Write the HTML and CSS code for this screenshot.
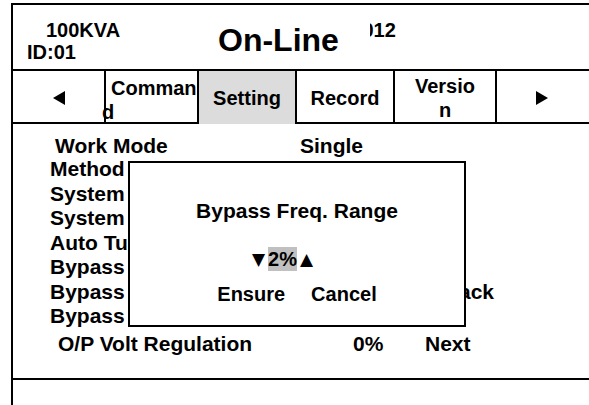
FILE: index.html
```html
<!DOCTYPE html>
<html lang="en">
<head>
    <meta charset="UTF-8">
    <meta name="viewport" content="width=device-width, initial-scale=1.0">
    <title>UPS Setting</title>
    <link rel="stylesheet" href="styles.css">
</head>
<body>
    <div class="screen">
        <!-- 상단: 용량 / 상태 / 시간 -->
        <div class="head">
            <div class="unit">
                <div class="kva">100KVA</div>
                <div class="id">ID:01</div>
            </div>
            <div class="title">On-Line</div>
            <div class="clock"><span>2012</span></div>
        </div>

        <!-- 메뉴 탭 -->
        <div class="tabs">
            <div class="tab">
                <svg width="12" height="14" viewBox="0 0 12 14"><polygon points="12,0 12,14 0,7" fill="#000"/></svg>
            </div>
            <div class="tab cmd"><span class="l1">Comman</span><span class="l2">d</span></div>
            <div class="tab on">Setting</div>
            <div class="tab">Record</div>
            <div class="tab">Versio<br>n</div>
            <div class="tab">
                <svg width="12" height="14" viewBox="0 0 12 14"><polygon points="0,0 12,7 0,14" fill="#000"/></svg>
            </div>
        </div>

        <!-- 설정 목록 -->
        <div class="content">
            <div class="row work"><span class="lbl">Work Mode</span><span class="val">Single</span></div>
            <div class="row"><span class="lbl">Method of Start</span></div>
            <div class="row"><span class="lbl">System Voltage</span></div>
            <div class="row"><span class="lbl">System Frequency</span></div>
            <div class="row"><span class="lbl">Auto Turn On</span></div>
            <div class="row"><span class="lbl">Bypass Volt Range</span></div>
            <div class="row fb"><span class="lbl">Bypass Mode</span><span class="val">Fast Track</span></div>
            <div class="row"><span class="lbl">Bypass Freq. Range</span></div>
            <div class="row op"><span class="lbl">O/P Volt Regulation</span><span class="val">0%</span><span class="next">Next</span></div>

            <!-- 설정값 변경 팝업 -->
            <div class="dialog">
                <div class="dlg-title">Bypass Freq. Range</div>
                <div class="dlg-val"><span class="tri">▼</span><span class="sel">2%</span><span class="tri">▲</span></div>
                <div class="dlg-btns"><span>Ensure</span><span>Cancel</span></div>
            </div>
        </div>

        <div class="foot"></div>
    </div>
</body>
</html>
```

FILE: styles.css
```css
body {
    margin: 0;
    background: #fff;
    color: #000;
    font-family: "Liberation Sans", Arial, sans-serif;
    font-weight: bold;
    overflow: hidden;
}

.screen {
    margin: 3px 0 0 11px;
    width: 620px;
    height: 440px;
    border: 2px solid #000;
}

/* 상단 */
.head {
    display: flex;
    height: 64px;
}
.unit {
    width: 205px;
    padding-top: 14px;
    font-size: 20px;
    line-height: 22px;
}
.kva {
    padding-left: 33px;
}
.id {
    padding-left: 14px;
}
.title {
    margin-top: 18px;
    font-size: 32px;
    line-height: 34px;
}
.clock {
    margin: 14px 0 0 31px;
    width: 26px;
    overflow: hidden;
    font-size: 20px;
    line-height: 22px;
    display: flex;
    justify-content: flex-end;
}

/* 탭 */
.tabs {
    display: grid;
    grid-template-columns: 91px 93px 98px 98px 102px 91px;
    height: 51px;
    border-top: 2px solid #000;
    border-bottom: 2px solid #000;
    font-size: 20px;
    line-height: 24px;
}
.tab {
    display: flex;
    flex-direction: column;
    align-items: center;
    justify-content: center;
    text-align: center;
    border-left: 2px solid #000;
}
.tab:first-child {
    border-left: 0;
}
.tab.on {
    background: #dcdcdc;
}
.tab.cmd {
    align-items: flex-start;
    justify-content: flex-start;
    padding-top: 5px;
    white-space: nowrap;
}
.cmd .l1 {
    padding-left: 5px;
}
.cmd .l2 {
    margin-left: -4px;
}

/* 목록 */
.content {
    position: relative;
    box-sizing: border-box;
    height: 254px;
    padding-top: 11px;
    font-size: 21px;
    line-height: 24.5px;
}
.row {
    display: flex;
    white-space: nowrap;
    padding-left: 37px;
}
.row .lbl {
    width: 250px;
}
.row.work {
    padding-left: 42px;
    line-height: 22px;
}
.row.work .lbl {
    width: 245px;
}
.row.fb .val {
    width: 194px;
    text-align: right;
}
.row.op {
    padding-left: 45px;
    margin-top: 3px;
}
.row.op .lbl {
    width: 295px;
}
.row.op .val {
    width: 72px;
}

/* 팝업 */
.dialog {
    position: absolute;
    top: 37px;
    left: 115px;
    width: 334px;
    height: 162px;
    border: 2px solid #000;
    background: #fff;
    line-height: 24px;
}
.dlg-title {
    margin-top: 36px;
    text-align: center;
}
.dlg-val {
    margin-top: 24px;
    padding-left: 122px;
    display: flex;
    align-items: center;
    font-size: 20px;
}
.tri {
    font-family: "DejaVu Sans", sans-serif;
    font-size: 17px;
}
.sel {
    background: #c0c0c0;
    margin: 0 3px 0 3px;
}
.dlg-btns {
    margin-top: 11px;
    display: flex;
    justify-content: center;
    gap: 26px;
    font-size: 20px;
}

.foot {
    border-top: 2px solid #000;
}
```
